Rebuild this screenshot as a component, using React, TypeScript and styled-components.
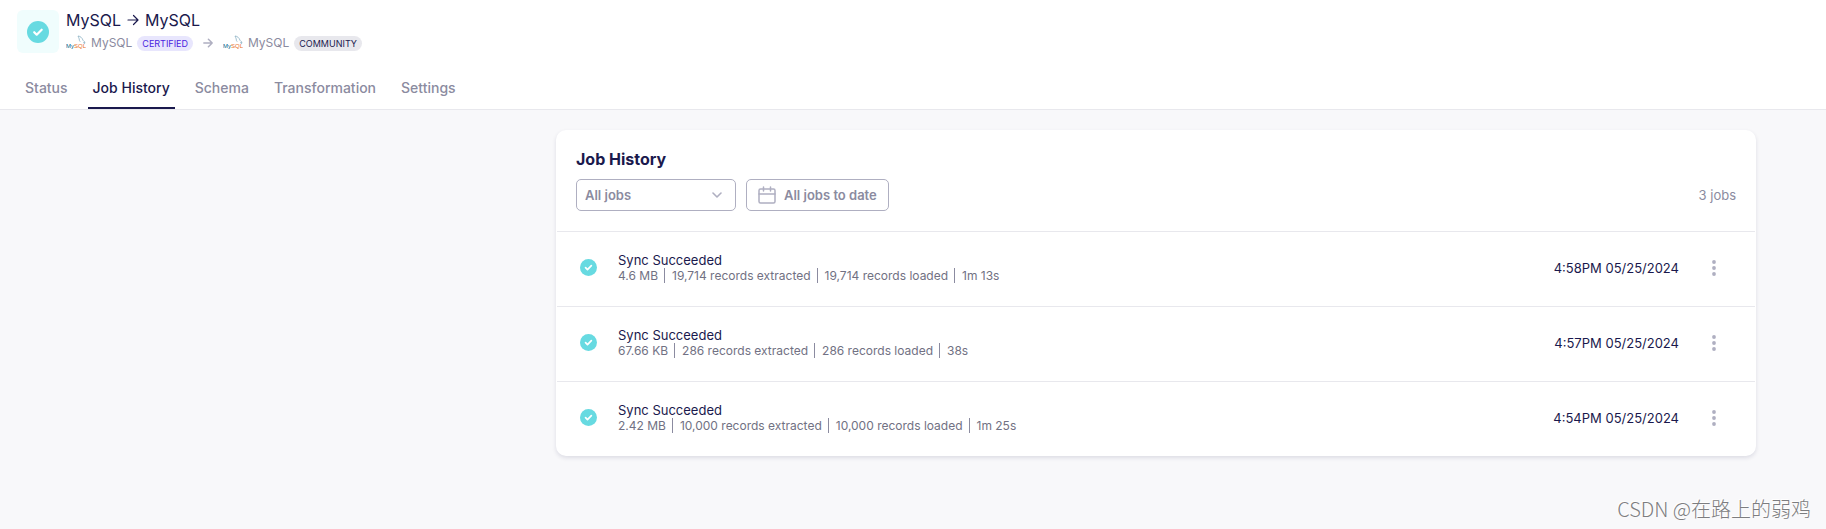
import React from 'react';
import styled, { createGlobalStyle } from 'styled-components';

const color = {
  ink: '#1a194d',
  muted: '#8b8ba0',
  detail: '#717183',
  icon: '#afafc1',
  line: '#e8e8ed',
  page: '#f8f8fa',
  teal: '#67dae1',
};

const GlobalStyle = createGlobalStyle`
  * { box-sizing: border-box; }
  body {
    margin: 0;
    background: ${color.page};
    color: ${color.ink};
    font-family: Inter, "Liberation Sans", sans-serif;
    font-size: 13px;
  }
  button, select { font-family: inherit; }
`;

const Page = styled.div`
  position: relative;
  min-height: 100vh;
  display: flex;
  flex-direction: column;
`;

const Header = styled.header`
  background: #fff;
  border-bottom: 1px solid ${color.line};
  padding: 10px 17px 0;
`;

const Connection = styled.div`
  display: flex;
  align-items: flex-start;
  gap: 7px;
`;

const StatusTile = styled.div`
  display: grid;
  place-items: center;
  width: 42px;
  height: 43px;
  border-radius: 6px;
  background: #f0fdfd;
`;

const ConnectionName = styled.h1`
  margin: 0;
  display: flex;
  align-items: center;
  gap: 6px;
  font-size: 16px;
  line-height: 20px;
  font-weight: 400;
`;

const Connectors = styled.div`
  display: flex;
  align-items: center;
  gap: 10px;
  margin-top: 4px;
`;

const ConnectorItem = styled.div`
  display: flex;
  align-items: center;
  gap: 5px;
  font-size: 12px;
  line-height: 18px;
  color: ${color.muted};
`;

const Badge = styled.span<{ $tone: 'certified' | 'community' }>`
  padding: 0 5px;
  border-radius: 8px;
  font-size: 9px;
  line-height: 15px;
  color: ${p => (p.$tone === 'certified' ? '#4a24e0' : color.ink)};
  background: ${p => (p.$tone === 'certified' ? '#e8e6fd' : '#e8e8ed')};
`;

const Tabs = styled.nav`
  display: flex;
  gap: 15px;
  margin-top: 21px;
  padding-left: 3px;
`;

const Tab = styled.a<{ $active?: boolean }>`
  padding: 4px 5px 9px;
  border-bottom: 2px solid ${p => (p.$active ? color.ink : 'transparent')};
  color: ${p => (p.$active ? color.ink : color.muted)};
  font-size: 14px;
  line-height: 20px;
  font-weight: 500;
  text-decoration: none;
`;

const Main = styled.main`
  display: flex;
  justify-content: flex-end;
  padding: 20px 70px;
`;

const Card = styled.section`
  flex: 0 1 1200px;
  border-radius: 10px;
  background: #fff;
  box-shadow: 0 2px 4px rgba(26, 25, 77, 0.12);
`;

const CardHeader = styled.div`
  padding: 19px 20px 20px;
`;

const CardTitle = styled.h2`
  margin: 0 0 10px;
  font-size: 16px;
  line-height: 20px;
  font-weight: 700;
`;

const Filters = styled.div`
  display: flex;
  align-items: center;
  gap: 10px;
`;

const SelectBox = styled.label`
  display: grid;
  align-items: center;
  width: 160px;

  > * { grid-area: 1 / 1; }
  > svg { justify-self: end; margin-right: 14px; pointer-events: none; }
`;

const Select = styled.select`
  appearance: none;
  width: 100%;
  height: 32px;
  padding: 0 8px;
  border: 1px solid ${color.icon};
  border-radius: 5px;
  background: #fff;
  color: ${color.muted};
  font-size: 13px;
  font-weight: 600;
`;

const DateButton = styled.button`
  display: flex;
  align-items: center;
  gap: 8px;
  height: 32px;
  padding: 0 11px;
  border: 1px solid ${color.icon};
  border-radius: 5px;
  background: #fff;
  color: ${color.muted};
  font-size: 13px;
  font-weight: 600;
`;

const JobCount = styled.span`
  margin-left: auto;
  color: ${color.muted};
`;

const JobList = styled.ul`
  margin: 0;
  padding: 0 1px;
  list-style: none;
`;

const JobRow = styled.li`
  display: flex;
  align-items: center;
  height: 75px;
  padding: 0 26px 3px 23px;
  border-top: 1px solid ${color.line};
`;

const JobSummary = styled.div`
  flex: 1;
  margin-left: 21px;
`;

const JobTitle = styled.div`
  line-height: 16px;
`;

const JobStats = styled.div`
  display: flex;
  font-size: 12px;
  line-height: 15px;
  color: ${color.detail};
`;

const Divider = styled.span`
  width: 1px;
  height: 15px;
  margin: 0 7px 0 6px;
  background: ${color.muted};
`;

const MenuButton = styled.button`
  display: grid;
  place-items: center;
  width: 30px;
  height: 30px;
  margin-left: 20px;
  padding: 0;
  border: 0;
  background: none;
`;

const Watermark = styled.div`
  position: absolute;
  right: 15px;
  bottom: 7px;
  font-family: "Noto Sans CJK SC", sans-serif;
  font-size: 20px;
  line-height: 26px;
  font-weight: 300;
  color: #7d7d80;
  text-shadow: -1px -1px 0 #fff;
`;

const CheckIcon = ({ size }: { size: number }) => (
  <svg width={size} height={size} viewBox="0 0 22 22" role="img" aria-label="Succeeded">
    <circle cx="11" cy="11" r="11" fill={color.teal} />
    <path d="M7.2 11.2l2.5 2.5 5-5" fill="none" stroke="#fff" strokeWidth="2.2" strokeLinecap="round" strokeLinejoin="round" />
  </svg>
);

const ArrowIcon = ({ size, stroke, weight }: { size: number; stroke: string; weight: number }) => (
  <svg width={size} height={size} viewBox="0 0 12 12" fill="none" stroke={stroke} strokeWidth={weight} strokeLinecap="round" strokeLinejoin="round" aria-hidden="true">
    <path d="M1 6h10M6.5 1.5L11 6l-4.5 4.5" />
  </svg>
);

const MySqlLogo = () => (
  <svg width="20" height="16" viewBox="0 0 20 16" aria-hidden="true">
    <text x="0" y="13" fontFamily="Liberation Sans, sans-serif" fontSize="6" fill="#00618a">My</text>
    <text x="8" y="13" fontFamily="Liberation Sans, sans-serif" fontSize="6" fill="#e8711c">SQL</text>
    <path d="M12 1c2.5.3 4.2 1.8 5 4.3.5 1 1.7 1.4 2.2 2.2l-1.7.2 1.5 1.4M12 1c.4 1.2 1 1.8 1.2 2.9.1 1.3.2 2.2 1 2.8" fill="none" stroke="#7ba6bc" strokeWidth=".7" />
  </svg>
);

const ChevronIcon = () => (
  <svg width="10" height="6" viewBox="0 0 10 6" fill="none" stroke={color.icon} strokeWidth="1.6" strokeLinecap="round" strokeLinejoin="round" aria-hidden="true">
    <path d="M1 1l4 4 4-4" />
  </svg>
);

const CalendarIcon = () => (
  <svg width="18" height="18" viewBox="0 0 18 18" fill="none" stroke={color.icon} strokeWidth="1.5" strokeLinecap="round" strokeLinejoin="round" aria-hidden="true">
    <rect x="1" y="3" width="16" height="14" rx="1.5" />
    <path d="M1 8h16M5.5 1v4M12.5 1v4" />
  </svg>
);

const DotsIcon = () => (
  <svg width="4" height="16" viewBox="0 0 4 16" fill={color.icon} aria-hidden="true">
    <circle cx="2" cy="2" r="1.9" />
    <circle cx="2" cy="8" r="1.9" />
    <circle cx="2" cy="14" r="1.9" />
  </svg>
);

const tabs = ['Status', 'Job History', 'Schema', 'Transformation', 'Settings'];

const jobs = [
  { stats: ['4.6 MB', '19,714 records extracted', '19,714 records loaded', '1m 13s'], time: '4:58PM 05/25/2024' },
  { stats: ['67.66 KB', '286 records extracted', '286 records loaded', '38s'], time: '4:57PM 05/25/2024' },
  { stats: ['2.42 MB', '10,000 records extracted', '10,000 records loaded', '1m 25s'], time: '4:54PM 05/25/2024' },
];

export default function App() {
  return (
    <Page>
      <GlobalStyle />
      <Header>
        <Connection>
          <StatusTile><CheckIcon size={22} /></StatusTile>
          <div>
            <ConnectionName>
              MySQL <ArrowIcon size={12} stroke={color.ink} weight={1.2} /> MySQL
            </ConnectionName>
            <Connectors>
              <ConnectorItem>
                <MySqlLogo /> MySQL <Badge $tone="certified">CERTIFIED</Badge>
              </ConnectorItem>
              <ArrowIcon size={10} stroke={color.icon} weight={1.8} />
              <ConnectorItem>
                <MySqlLogo /> MySQL <Badge $tone="community">COMMUNITY</Badge>
              </ConnectorItem>
            </Connectors>
          </div>
        </Connection>
        <Tabs>
          {tabs.map(tab => (
            <Tab key={tab} href="#" $active={tab === 'Job History'}>{tab}</Tab>
          ))}
        </Tabs>
      </Header>
      <Main>
        <Card>
          <CardHeader>
            <CardTitle>Job History</CardTitle>
            <Filters>
              <SelectBox>
                <Select aria-label="Job status" defaultValue="all">
                  <option value="all">All jobs</option>
                </Select>
                <ChevronIcon />
              </SelectBox>
              <DateButton type="button"><CalendarIcon /> All jobs to date</DateButton>
              <JobCount>3 jobs</JobCount>
            </Filters>
          </CardHeader>
          <JobList>
            {jobs.map(job => (
              <JobRow key={job.time}>
                <CheckIcon size={17} />
                <JobSummary>
                  <JobTitle>Sync Succeeded</JobTitle>
                  <JobStats>
                    {job.stats.map((stat, i) => (
                      <React.Fragment key={stat}>
                        {i > 0 && <Divider />}
                        <span>{stat}</span>
                      </React.Fragment>
                    ))}
                  </JobStats>
                </JobSummary>
                <time>{job.time}</time>
                <MenuButton type="button" aria-label="Job actions"><DotsIcon /></MenuButton>
              </JobRow>
            ))}
          </JobList>
        </Card>
      </Main>
      <Watermark>CSDN @在路上的弱鸡</Watermark>
    </Page>
  );
}
